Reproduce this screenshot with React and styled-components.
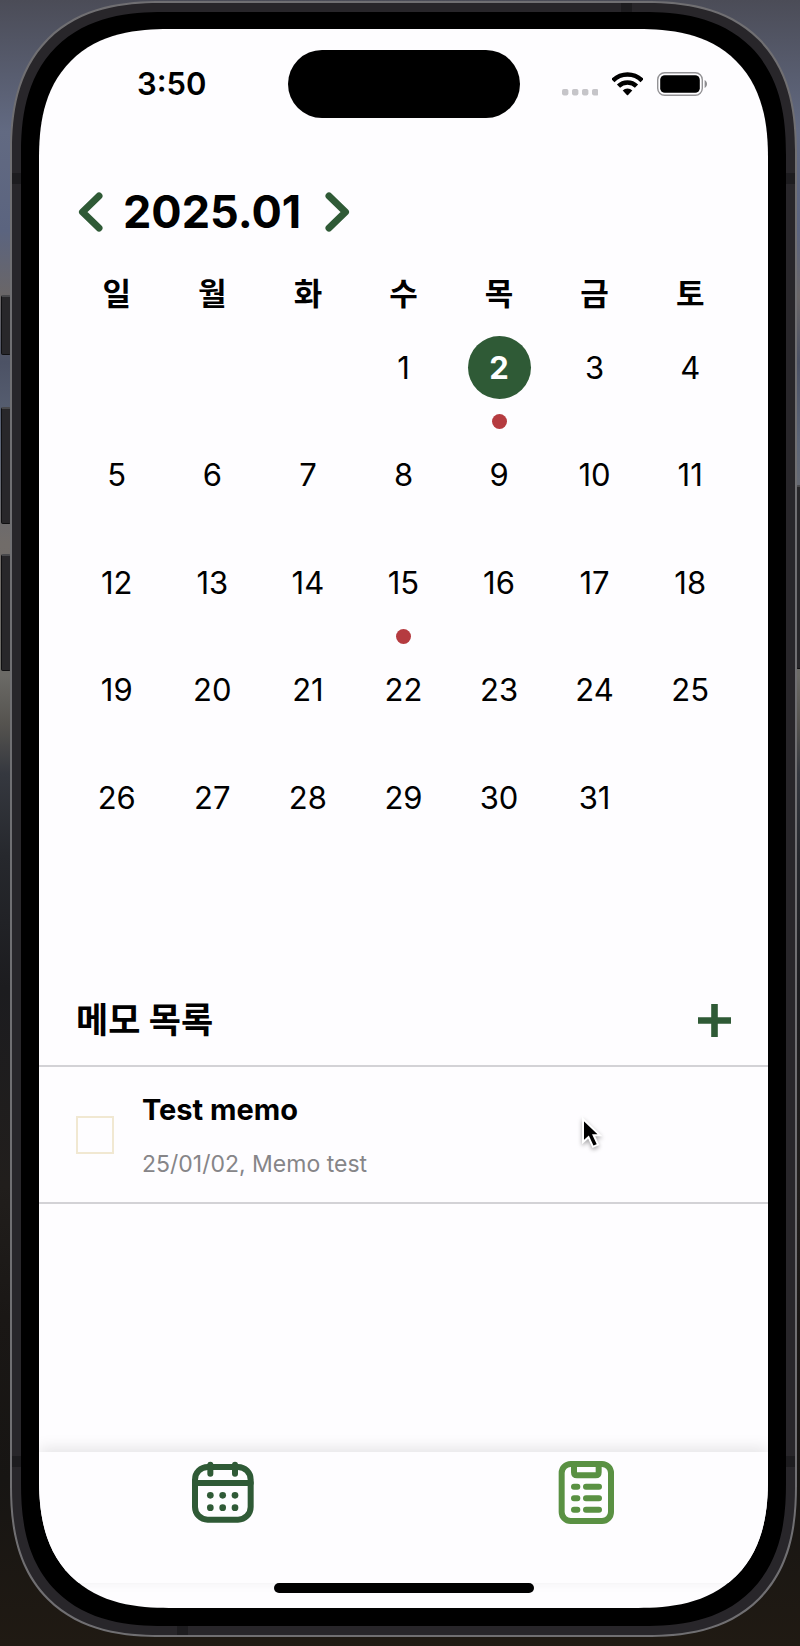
import React, { useState } from "react";
import styled, { createGlobalStyle } from "styled-components";

const GREEN = "#2f5a36";
const LIGHT_GREEN = "#5a9143";
const RED = "#b53b40";
const SCREEN = "#fefdff";

const GlobalStyle = createGlobalStyle`
  *, *::before, *::after { box-sizing: border-box; }
  body {
    margin: 0;
    font-family: Inter, "Noto Sans CJK KR", sans-serif;
    color: #000;
  }
  button { font: inherit; color: inherit; background: none; border: 0; padding: 0; }
  h1, h2, h3, p, ul { margin: 0; padding: 0; }
  svg { display: block; }
`;

const Desktop = styled.div`
  position: relative;
  display: flex;
  min-height: 100vh;
  padding: 1px 3px 9px 10px;
  background: linear-gradient(
    180deg,
    #4b4c57 0%, #626a82 8%, #5b647f 14%, #6a6667 18%, #4c5265 22%,
    #5c6577 27%, #716c69 33%, #6b6a66 41%, #55534f 44%, #35383f 47%, #26282d 52%,
    #1c1c1f 60%, #211e1c 72%, #1a1715 80%, #171513 90%, #201a13 100%
  );
`;

const SideKey = styled.span`
  position: absolute;
  top: ${(p) => p.$top}px;
  height: ${(p) => p.$height}px;
  width: 10px;
  ${(p) => (p.$side === "left" ? "left: 1px;" : "right: -6px;")}
  background: #28272a;
  border: 1px solid #101012;
  border-top: 2px solid #49494c;
  border-radius: 2px;
`;

const Phone = styled.div`
  position: relative;
  flex: 1;
  display: flex;
  padding: 9px;
  background: #28262a;
  border: 2px solid #706f72;
  border-radius: 134px;
  @supports (corner-shape: superellipse(1.3)) {
    border-radius: 152px;
    corner-shape: superellipse(1.3);
  }
`;

/* Antenna breaks in the metal rim. */
const AntennaBand = styled.span`
  position: absolute;
  background: #1d1c1f;
  ${(p) => (p.$side === "left" || p.$side === "right" ? "width: 9px; height: 11px;" : "width: 11px; height: 9px;")}
  ${(p) => p.$side}: 0;
  ${(p) => p.$from}: ${(p) => p.$offset}px;
`;

const Bezel = styled.div`
  flex: 1;
  display: flex;
  padding: 17px 18px 18px;
  background: #000;
  border-radius: 125px;
  @supports (corner-shape: superellipse(1.3)) {
    border-radius: 143px;
    corner-shape: superellipse(1.3);
  }
`;

const Screen = styled.div`
  flex: 1;
  min-width: 0;
  display: flex;
  flex-direction: column;
  background: ${SCREEN};
  border-radius: 108px;
  overflow: hidden;
  @supports (corner-shape: superellipse(1.3)) {
    border-radius: 130px;
    corner-shape: superellipse(1.3);
  }
`;

const StatusBar = styled.header`
  display: grid;
  grid-template-columns: 1fr 232px 1fr;
  align-items: center;
  height: 68px;
  margin-top: 21px;
`;

const Clock = styled.time`
  padding-left: 17px;
  text-align: center;
  font-size: 31px;
  line-height: 40px;
  font-weight: 600;
`;

const Island = styled.div`
  height: 68px;
  border-radius: 34px;
  background: #000;
`;

const StatusIcons = styled.div`
  display: flex;
  align-items: center;
  gap: 14px;
  padding-left: 42px;
`;

const Month = styled.nav`
  display: flex;
  align-items: center;
  gap: 20px;
  height: 60px;
  margin-top: 64px;
  padding-left: 39px;
`;

const MonthTitle = styled.h1`
  padding-right: 4px;
  font-size: 45px;
  line-height: 60px;
  font-weight: 700;
`;

const Calendar = styled.table`
  width: auto;
  margin: 20px 30px 0;
  border-collapse: collapse;
  table-layout: fixed;
`;

const Weekday = styled.th`
  height: 74px;
  padding: 0 0 10px;
  font-size: 31px;
  line-height: 44px;
  font-weight: 700;
`;

const DayCell = styled.td`
  height: ${(p) => p.$height}px;
  padding: 0;
  vertical-align: top;
`;

const Day = styled.button`
  display: flex;
  flex-direction: column;
  align-items: center;
  gap: 15px;
  width: 100%;
`;

const DayNumber = styled.span`
  width: 63px;
  height: 63px;
  border-radius: 50%;
  font-size: 31px;
  line-height: 63px;
  text-align: center;
  font-weight: ${(p) => (p.$selected ? 700 : 400)};
  color: ${(p) => (p.$selected ? "#fff" : "#000")};
  background: ${(p) => (p.$selected ? GREEN : "transparent")};
`;

const EventDot = styled.span`
  width: 15px;
  height: 15px;
  border-radius: 50%;
  background: ${RED};
`;

const MemoHeader = styled.div`
  display: flex;
  align-items: center;
  justify-content: space-between;
  height: 86px;
  padding: 0 37px 6px;
  border-bottom: 2px solid #d3d2d6;
`;

const MemoHeading = styled.h2`
  font-size: 35px;
  line-height: 50px;
  font-weight: 700;
`;

const MemoList = styled.ul`
  flex: 1;
  list-style: none;
`;

const MemoItem = styled.li`
  display: flex;
  align-items: center;
  gap: 28px;
  height: 137px;
  padding: 0 37px;
  border-bottom: 2px solid #d3d2d6;
`;

const Check = styled.input`
  appearance: none;
  flex: none;
  width: 38px;
  height: 38px;
  margin: 0;
  border: 2px solid #f1e8d2;
  background: transparent;
  &:checked { background: #f1e8d2; }
`;

const MemoText = styled.label`
  display: flex;
  flex-direction: column;
  gap: 20px;
  padding-top: 4px;
`;

const MemoTitle = styled.span`
  font-size: 29px;
  line-height: 34px;
  font-weight: 700;
`;

const MemoMeta = styled.span`
  font-size: 23px;
  line-height: 34px;
  color: #868588;
`;

const TabBar = styled.nav`
  display: grid;
  grid-template-columns: 1fr 1fr;
  justify-items: center;
  height: 131px;
  padding: 8px 0 0 2px;
  background: ${SCREEN};
  box-shadow: 0 -4px 14px rgba(0, 0, 0, 0.1);
`;

const Tab = styled.a`
  height: 64px;
`;

const HomeIndicator = styled.div`
  position: relative;
  width: 260px;
  height: 10px;
  margin: 0 auto 15px;
  border-radius: 5px;
  background: #000;
`;

const Pointer = styled.svg`
  position: absolute;
  top: 1113px;
  left: 567px;
  filter: drop-shadow(0 2px 2px rgba(0, 0, 0, 0.35));
`;

const SignalIcon = () => (
  <svg width="36" height="24" viewBox="0 0 36 24" fill="#c6c5c9" aria-hidden="true">
    {[0, 10, 20, 30].map((x) => (
      <rect key={x} x={x} y="17" width="6.4" height="6.4" rx="1.8" />
    ))}
  </svg>
);

const WifiIcon = () => (
  <svg width="31" height="24" viewBox="0 0 31 24" aria-hidden="true">
    <g fill="none" stroke="#000" strokeWidth="4.5">
      <path d="M.9 8.6A20.6 20.6 0 0 1 30.1 8.6" />
      <path d="M6.5 14.2A12.7 12.7 0 0 1 24.5 14.2" />
    </g>
    <path d="M10.7 18.4a6.8 6.8 0 0 1 9.6 0L16.1 23q-.6.6-1.2 0z" />
  </svg>
);

const BatteryIcon = () => (
  <svg width="51" height="24" viewBox="0 0 51 24" aria-hidden="true">
    <rect x=".7" y=".7" width="44.6" height="22.6" rx="7" fill="none" stroke="#939295" strokeWidth="1.4" />
    <rect x="3.2" y="3.2" width="39.6" height="17.6" rx="4.6" />
    <path d="M47.6 8v8c3.2-1.4 3.2-6.6 0-8z" fill="#8e8d90" />
  </svg>
);

const Chevron = ({ right }) => (
  <svg width="25" height="40" viewBox="0 0 25 40" fill="none" stroke={GREEN} strokeWidth="7" strokeLinecap="round" strokeLinejoin="round" aria-hidden="true">
    <path d={right ? "M4 4 20.500 20 4 36" : "M21 4 4.500 20 21 36"} />
  </svg>
);

const PlusIcon = () => (
  <svg width="33" height="33" viewBox="0 0 33 33" fill={GREEN} aria-hidden="true">
    <path d="M13.200 0h6.600v13.200H33v6.600H19.800V33h-6.600V19.800H0v-6.600h13.200z" />
  </svg>
);

const CalendarIcon = () => (
  <svg width="64" height="64" viewBox="0 0 192 192" fill="none" stroke={GREEN} strokeWidth="18" strokeLinecap="round" aria-hidden="true">
    <rect x="12" y="21" width="167" height="158" rx="38" />
    <path d="M12 69h167M58 14v27M132 14v27" />
    <g fill={GREEN} stroke="none">
      {[106, 143].map((y) => [58, 95, 132].map((x) => <circle key={`${x}-${y}`} cx={x} cy={y} r="10" />))}
    </g>
  </svg>
);

const ListIcon = () => (
  <svg width="57" height="64" viewBox="0 0 171 192" fill="none" stroke={LIGHT_GREEN} strokeWidth="18" strokeLinecap="round" aria-hidden="true">
    <rect x="11" y="12" width="148" height="171" rx="27" />
    <path d="M48 12v25q0 9 9 9h56q9 0 9-9V12" />
    <path d="M48 80h10M84 80h39M48 115h10M84 115h39M48 149h10M84 149h39" />
  </svg>
);

const WEEKDAYS = ["일", "월", "화", "수", "목", "금", "토"];
const FIRST_WEEKDAY = 3;
const DAYS_IN_MONTH = 31;
const EVENTS = [2, 15];
const ROW_HEIGHTS = [107, 108, 107, 108, 107, 108];

const weeks = ROW_HEIGHTS.map((height, w) => ({
  height,
  days: WEEKDAYS.map((_, d) => {
    const day = w * 7 + d - FIRST_WEEKDAY + 1;
    return day >= 1 && day <= DAYS_IN_MONTH ? day : null;
  }),
}));

export default function App() {
  const [selected, setSelected] = useState(2);
  return (
    <>
      <GlobalStyle />
      <Desktop>
        <SideKey $side="left" $top={295} $height={60} />
        <SideKey $side="left" $top={407} $height={117} />
        <SideKey $side="left" $top={554} $height={117} />
        <SideKey $side="right" $top={485} $height={184} />
        <Phone>
          <AntennaBand $side="left" $from="top" $offset={170} />
          <AntennaBand $side="right" $from="top" $offset={170} />
          <AntennaBand $side="left" $from="bottom" $offset={168} />
          <AntennaBand $side="right" $from="bottom" $offset={168} />
          <AntennaBand $side="top" $from="right" $offset={163} />
          <AntennaBand $side="bottom" $from="left" $offset={165} />
          <Bezel>
            <Screen>
              <StatusBar>
                <Clock>3:50</Clock>
                <Island />
                <StatusIcons>
                  <SignalIcon />
                  <WifiIcon />
                  <BatteryIcon />
                </StatusIcons>
              </StatusBar>
              <Month aria-label="Month">
                <button aria-label="Previous month"><Chevron /></button>
                <MonthTitle>2025.01</MonthTitle>
                <button aria-label="Next month"><Chevron right /></button>
              </Month>
              <Calendar>
                <thead>
                  <tr>
                    {WEEKDAYS.map((name) => (
                      <Weekday key={name} scope="col">{name}</Weekday>
                    ))}
                  </tr>
                </thead>
                <tbody>
                  {weeks.map(({ height, days }, w) => (
                    <tr key={w}>
                      {days.map((day, d) => (
                        <DayCell key={d} $height={height}>
                          {day && (
                            <Day onClick={() => setSelected(day)}>
                              <DayNumber $selected={day === selected}>{day}</DayNumber>
                              {EVENTS.includes(day) && <EventDot />}
                            </Day>
                          )}
                        </DayCell>
                      ))}
                    </tr>
                  ))}
                </tbody>
              </Calendar>
              <MemoHeader>
                <MemoHeading>메모 목록</MemoHeading>
                <button aria-label="Add memo"><PlusIcon /></button>
              </MemoHeader>
              <MemoList>
                <MemoItem>
                  <Check type="checkbox" id="memo-1" />
                  <MemoText htmlFor="memo-1">
                    <MemoTitle>Test memo</MemoTitle>
                    <MemoMeta>25/01/02, Memo test</MemoMeta>
                  </MemoText>
                </MemoItem>
              </MemoList>
              <TabBar aria-label="Main">
                <Tab href="#calendar" aria-label="Calendar"><CalendarIcon /></Tab>
                <Tab href="#list" aria-label="List"><ListIcon /></Tab>
              </TabBar>
              <HomeIndicator />
            </Screen>
          </Bezel>
          <Pointer width="26" height="36" viewBox="0 0 26 36" aria-hidden="true">
            <path d="M4 3v23l5.500-4.800 4.500 9.600 5-2.200-4.400-9.300H21z" fill="#000" stroke="#fff" strokeWidth="2" />
          </Pointer>
        </Phone>
      </Desktop>
    </>
  );
}
